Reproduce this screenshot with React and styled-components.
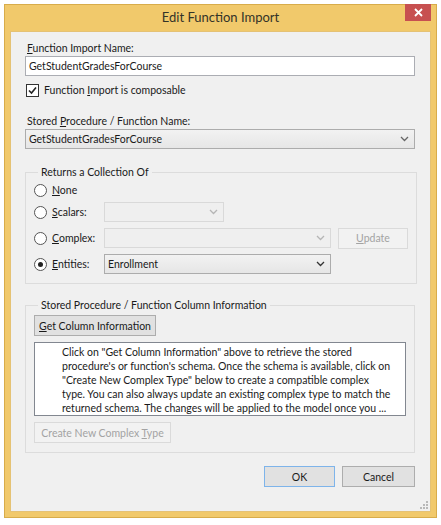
import React from 'react';
import styled, { createGlobalStyle } from 'styled-components';

const GlobalStyle = createGlobalStyle`
  body {
    margin: 0;
    background: #ffffff;
    font-family: Lato, "Open Sans", sans-serif;
    font-size: 10.5px;
    color: #1a1a1a;
  }
`;

const infoLines = [
  'Click on "Get Column Information" above to retrieve the stored',
  "procedure's or function's schema. Once the schema is available, click on",
  '"Create New Complex Type" below to create a compatible complex',
  'type. You can also always update an existing complex type to match the',
  'returned schema. The changes will be applied to the model once you ...',
];

const Chevron = ({ color = '#444' }) => (
  <svg width="9" height="6" viewBox="0 0 9 6">
    <polyline points="1,1 4.5,4.5 8,1" fill="none" stroke={color} strokeWidth="1.3" />
  </svg>
);

const Dialog = () => {
  return (
    <>
      <GlobalStyle />
      <Window>
        <TitleBar>
          <span />
          <Title>Edit Function Import</Title>
          <CloseButton>
            <svg width="9" height="9" viewBox="0 0 9 9">
              <path d="M1 1 L8 8 M8 1 L1 8" stroke="#fff" strokeWidth="1.8" />
            </svg>
          </CloseButton>
        </TitleBar>
        <Client>
          <Label>
            <u>F</u>unction Import Name:
          </Label>
          <TextBox>GetStudentGradesForCourse</TextBox>
          <CheckRow>
            <CheckBox>
              <svg width="9" height="9" viewBox="0 0 9 9">
                <polyline points="1,4.5 3.5,7 8,1.5" fill="none" stroke="#222" strokeWidth="1.6" />
              </svg>
            </CheckBox>
            <span>
              Function <u>I</u>mport is composable
            </span>
          </CheckRow>
          <Label $top={16}>
            Stored <u>P</u>rocedure / Function Name:
          </Label>
          <Combo $width="100%">
            <span>GetStudentGradesForCourse</span>
            <Chevron color="#666" />
          </Combo>

          <Group $top={16}>
            <Legend>Returns a Collection Of</Legend>
            <RadioRow $compact>
              <Radio />
              <RadioLabel>
                <u>N</u>one
              </RadioLabel>
            </RadioRow>
            <RadioRow>
              <Radio />
              <RadioLabel>
                <u>S</u>calars:
              </RadioLabel>
              <Combo $width="120px" $disabled>
                <span />
                <Chevron color="#b5b5b5" />
              </Combo>
            </RadioRow>
            <RadioRow>
              <Radio />
              <RadioLabel>
                <u>C</u>omplex:
              </RadioLabel>
              <Combo $width="227px" $disabled>
                <span />
                <Chevron color="#b5b5b5" />
              </Combo>
              <Button $width="70px" $left={7} $disabled>
                <span>
                  <u>U</u>pdate
                </span>
              </Button>
            </RadioRow>
            <RadioRow>
              <Radio $checked />
              <RadioLabel>
                <u>E</u>ntities:
              </RadioLabel>
              <Combo $width="227px">
                <span>Enrollment</span>
                <Chevron color="#333" />
              </Combo>
            </RadioRow>
          </Group>

          <Group $top={14}>
            <Legend>Stored Procedure / Function Column Information</Legend>
            <ColumnBody>
              <Button $width="122px">
                <span>
                  <u>G</u>et Column Information
                </span>
              </Button>
              <InfoBox>
                {infoLines.map((line) => (
                  <InfoLine key={line}>{line}</InfoLine>
                ))}
              </InfoBox>
              <Button $width="137px" $disabled>
                <span>
                  Create New Complex <u>T</u>ype
                </span>
              </Button>
            </ColumnBody>
          </Group>

          <Footer>
            <Button $width="71px" $default>
              <span>OK</span>
            </Button>
            <Button $width="73px">
              <span>Cancel</span>
            </Button>
          </Footer>
          <Grip>
            <svg width="8" height="8" viewBox="0 0 8 8" fill="#b8b8b8">
              <rect x="6" y="0" width="2" height="2" />
              <rect x="3" y="3" width="2" height="2" />
              <rect x="6" y="3" width="2" height="2" />
              <rect x="0" y="6" width="2" height="2" />
              <rect x="3" y="6" width="2" height="2" />
              <rect x="6" y="6" width="2" height="2" />
            </svg>
          </Grip>
        </Client>
      </Window>
    </>
  );
};

export default Dialog;

const Window = styled.div`
  margin: 4px;
  width: 433px;
  height: 514px;
  box-sizing: border-box;
  background: #f1c96b;
  border: 1px solid #d8ac4a;
  padding: 0 5px 5px 5px;
  display: flex;
  flex-direction: column;
`;

const TitleBar = styled.div`
  height: 26px;
  display: grid;
  grid-template-columns: 1fr auto 1fr;
  align-items: start;
`;

const Title = styled.div`
  font-size: 13px;
  color: #333328;
  padding-top: 4px;
  line-height: 17px;
`;

const CloseButton = styled.div`
  justify-self: end;
  width: 26px;
  height: 17px;
  margin-top: -1px;
  background: #c75050;
  display: flex;
  align-items: center;
  justify-content: center;
`;

const Client = styled.div`
  position: relative;
  flex: 1;
  background: #f0f0f0;
  border: 1px solid #e5c274;
  padding: 9px 15px 0 14px;
  display: flex;
  flex-direction: column;
`;

const Label = styled.div`
  margin-top: ${(p) => p.$top || 0}px;
  line-height: 15px;
  padding-left: 2px;
`;

const TextBox = styled.div`
  height: 20px;
  box-sizing: border-box;
  border: 1px solid #abadb3;
  background: #fff;
  padding: 0 3px;
  line-height: 18px;
`;

const CheckRow = styled.div`
  margin-top: 7px;
  display: flex;
  align-items: center;
  gap: 5px;
  padding-left: 1px;
  line-height: 15px;
`;

const CheckBox = styled.div`
  width: 11px;
  height: 11px;
  border: 1px solid #333;
  background: #fff;
  display: flex;
  align-items: center;
  justify-content: center;
`;

const Combo = styled.div`
  width: ${(p) => p.$width};
  height: 20px;
  box-sizing: border-box;
  border: 1px solid ${(p) => (p.$disabled ? '#d9d9d9' : '#acacac')};
  background: ${(p) =>
    p.$disabled ? '#efefef' : 'linear-gradient(#f2f2f2, #e6e6e6)'};
  display: flex;
  align-items: center;
  justify-content: space-between;
  padding: 0 5px 0 3px;
  line-height: 18px;
`;

const Group = styled.fieldset`
  margin: ${(p) => p.$top}px 0 0 0;
  border: 1px solid #dcdcdc;
  padding: 0 8px 9px 8px;
  display: flex;
  flex-direction: column;
  gap: 6px;
`;

const Legend = styled.legend`
  padding: 0 3px;
  margin-left: 4px;
  line-height: 15px;
`;

const RadioRow = styled.div`
  display: flex;
  align-items: center;
  height: 20px;
  margin-bottom: ${(p) => (p.$compact ? -4 : 0)}px;
`;

const Radio = styled.div`
  width: 11px;
  height: 11px;
  border-radius: 50%;
  border: 1px solid #555;
  background: #fff;
  margin-right: 5px;
  display: flex;
  align-items: center;
  justify-content: center;

  &::after {
    content: '';
    display: ${(p) => (p.$checked ? 'block' : 'none')};
    width: 5px;
    height: 5px;
    border-radius: 50%;
    background: #222;
  }
`;

const RadioLabel = styled.span`
  width: 52px;
`;

const Button = styled.div`
  width: ${(p) => p.$width};
  height: 21px;
  box-sizing: border-box;
  margin-left: ${(p) => p.$left || 0}px;
  border: 1px solid
    ${(p) => (p.$disabled ? '#dadada' : p.$default ? '#7eb4ea' : '#adadad')};
  background: ${(p) => (p.$disabled ? '#f2f2f2' : '#e1e1e1')};
  color: ${(p) => (p.$disabled ? '#a3a3a3' : '#1a1a1a')};
  display: flex;
  align-items: center;
  justify-content: center;
  white-space: nowrap;
`;

const ColumnBody = styled.div`
  display: flex;
  flex-direction: column;
  align-items: flex-start;
  gap: 6px;
  padding-top: 2px;
`;

const InfoBox = styled.div`
  width: 372px;
  height: 74px;
  box-sizing: border-box;
  border: 1px solid #828790;
  background: #fff;
  padding: 2px 4px 0 27px;
  line-height: 14px;
  overflow: hidden;
`;

const InfoLine = styled.div`
  white-space: nowrap;
`;

const Footer = styled.div`
  margin-top: 13px;
  display: flex;
  justify-content: flex-end;
  gap: 7px;
`;

const Grip = styled.div`
  position: absolute;
  right: 2px;
  bottom: 2px;
  line-height: 0;
`;
